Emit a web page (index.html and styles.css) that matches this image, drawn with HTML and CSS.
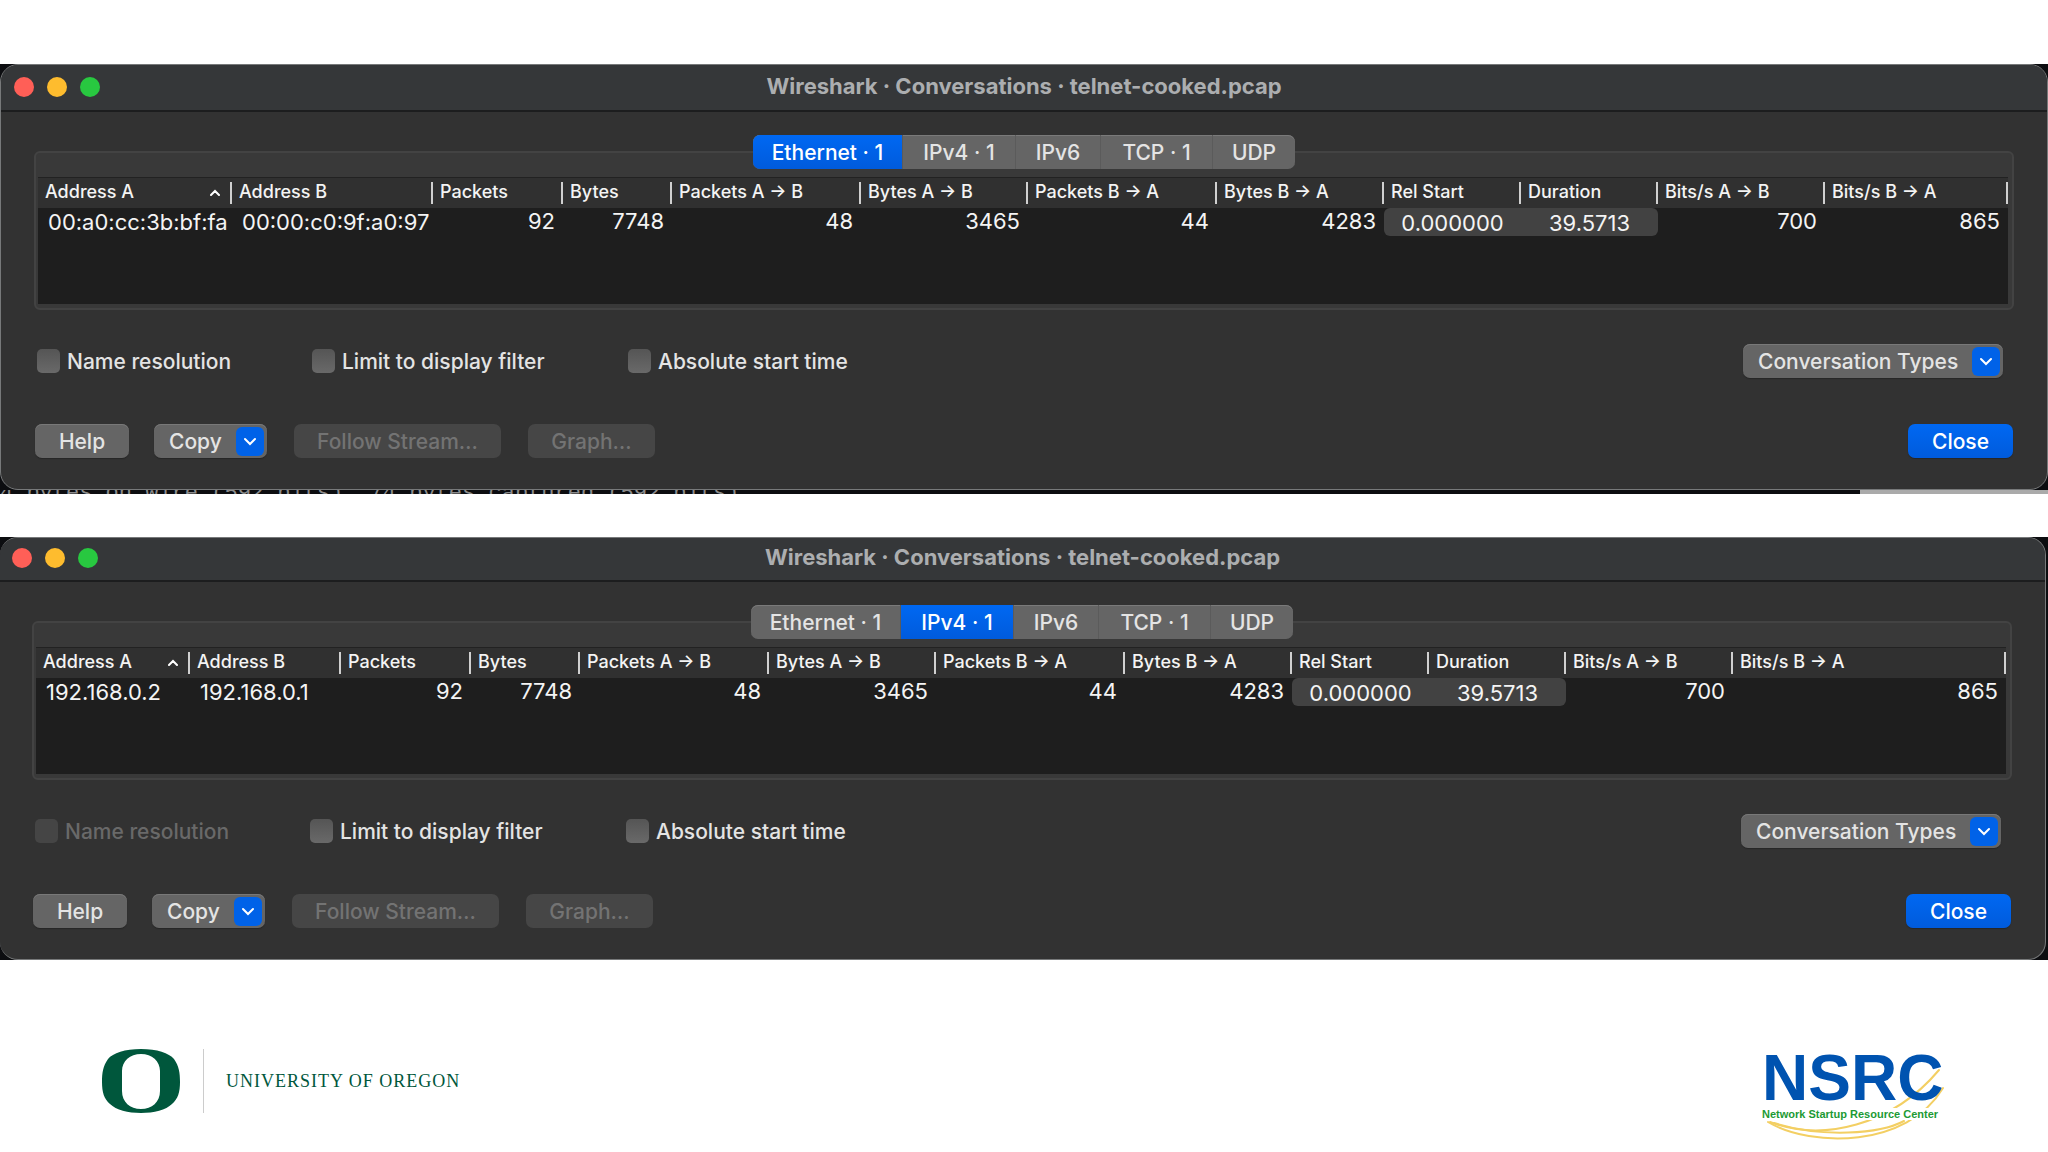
FILE: index.html
```html
<!DOCTYPE html>
<html lang="en">
<head>
  <meta charset="UTF-8">
  <meta name="viewport" content="width=device-width, initial-scale=1.0">
  <title>Wireshark Conversations</title>
  <link rel="stylesheet" href="styles.css">
</head>
<body>
  <main class="slide">

    <!-- Ethernet tab -->
    <div class="shot">
      <section class="window">
        <header class="titlebar">
          <div class="lights">
            <button class="light red" aria-label="Close window"></button>
            <button class="light yellow" aria-label="Minimize"></button>
            <button class="light green" aria-label="Zoom"></button>
          </div>
          <h2>Wireshark · Conversations · telnet-cooked.pcap</h2>
        </header>
        <div class="content">
          <nav class="tabs">
            <button class="tab tab-eth active">Ethernet · 1</button>
            <button class="tab tab-ip4">IPv4 · 1</button>
            <button class="tab tab-ip6">IPv6</button>
            <button class="tab tab-tcp">TCP · 1</button>
            <button class="tab tab-udp">UDP</button>
          </nav>
          <div class="group">
            <div class="list">
              <table>
                <colgroup>
                  <col class="mac-a"><col class="mac-b"><col class="packets"><col class="bytes">
                  <col class="packets-dir"><col class="bytes-dir"><col class="packets-dir"><col class="bytes-dir">
                  <col class="time"><col class="time"><col class="bytes-dir"><col>
                </colgroup>
                <thead>
                  <tr>
                    <th><span class="sorted">Address A <svg width="10" height="7" viewBox="0 0 10 7"><path d="M1 6l4-4 4 4"/></svg></span></th>
                    <th>Address B</th>
                    <th>Packets</th>
                    <th>Bytes</th>
                    <th>Packets A → B</th>
                    <th>Bytes A → B</th>
                    <th>Packets B → A</th>
                    <th>Bytes B → A</th>
                    <th>Rel Start</th>
                    <th>Duration</th>
                    <th>Bits/s A → B</th>
                    <th>Bits/s B → A</th>
                  </tr>
                </thead>
                <tbody>
                  <tr>
                    <td class="addr">00:a0:cc:3b:bf:fa</td>
                    <td class="addr">00:00:c0:9f:a0:97</td>
                    <td>92</td>
                    <td>7748</td>
                    <td>48</td>
                    <td>3465</td>
                    <td>44</td>
                    <td>4283</td>
                    <td class="span first">0.000000</td>
                    <td class="span last">39.5713</td>
                    <td>700</td>
                    <td>865</td>
                  </tr>
                </tbody>
              </table>
            </div>
          </div>
          <div class="options">
            <label class="check check-name"><input type="checkbox">Name resolution</label>
            <label class="check check-limit"><input type="checkbox">Limit to display filter</label>
            <label class="check"><input type="checkbox">Absolute start time</label>
            <button class="btn menu types">Conversation Types <span class="arrow"><svg width="12" height="9" viewBox="0 0 12 9"><path d="M1 2l5 5 5-5"/></svg></span></button>
          </div>
          <div class="actions">
            <button class="btn help">Help</button>
            <button class="btn menu copy">Copy <span class="arrow"><svg width="12" height="9" viewBox="0 0 12 9"><path d="M1 2l5 5 5-5"/></svg></span></button>
            <button class="btn follow" disabled>Follow Stream…</button>
            <button class="btn graph" disabled>Graph…</button>
            <button class="btn close">Close</button>
          </div>
        </div>
      </section>
      <div class="behind">4 bytes on wire (592 bits), 74 bytes captured (592 bits)</div>
    </div>

    <!-- IPv4 tab -->
    <div class="shot second">
      <section class="window">
        <header class="titlebar">
          <div class="lights">
            <button class="light red" aria-label="Close window"></button>
            <button class="light yellow" aria-label="Minimize"></button>
            <button class="light green" aria-label="Zoom"></button>
          </div>
          <h2>Wireshark · Conversations · telnet-cooked.pcap</h2>
        </header>
        <div class="content">
          <nav class="tabs">
            <button class="tab tab-eth">Ethernet · 1</button>
            <button class="tab tab-ip4 active">IPv4 · 1</button>
            <button class="tab tab-ip6">IPv6</button>
            <button class="tab tab-tcp">TCP · 1</button>
            <button class="tab tab-udp">UDP</button>
          </nav>
          <div class="group">
            <div class="list">
              <table>
                <colgroup>
                  <col class="ip-a"><col class="ip-b"><col class="packets"><col class="bytes">
                  <col class="packets-dir"><col class="bytes-dir"><col class="packets-dir"><col class="bytes-dir">
                  <col class="time"><col class="time"><col class="bytes-dir"><col>
                </colgroup>
                <thead>
                  <tr>
                    <th><span class="sorted">Address A <svg width="10" height="7" viewBox="0 0 10 7"><path d="M1 6l4-4 4 4"/></svg></span></th>
                    <th>Address B</th>
                    <th>Packets</th>
                    <th>Bytes</th>
                    <th>Packets A → B</th>
                    <th>Bytes A → B</th>
                    <th>Packets B → A</th>
                    <th>Bytes B → A</th>
                    <th>Rel Start</th>
                    <th>Duration</th>
                    <th>Bits/s A → B</th>
                    <th>Bits/s B → A</th>
                  </tr>
                </thead>
                <tbody>
                  <tr>
                    <td class="addr">192.168.0.2</td>
                    <td class="addr">192.168.0.1</td>
                    <td>92</td>
                    <td>7748</td>
                    <td>48</td>
                    <td>3465</td>
                    <td>44</td>
                    <td>4283</td>
                    <td class="span first">0.000000</td>
                    <td class="span last">39.5713</td>
                    <td>700</td>
                    <td>865</td>
                  </tr>
                </tbody>
              </table>
            </div>
          </div>
          <div class="options">
            <label class="check check-name off"><input type="checkbox" disabled>Name resolution</label>
            <label class="check check-limit"><input type="checkbox">Limit to display filter</label>
            <label class="check"><input type="checkbox">Absolute start time</label>
            <button class="btn menu types">Conversation Types <span class="arrow"><svg width="12" height="9" viewBox="0 0 12 9"><path d="M1 2l5 5 5-5"/></svg></span></button>
          </div>
          <div class="actions">
            <button class="btn help">Help</button>
            <button class="btn menu copy">Copy <span class="arrow"><svg width="12" height="9" viewBox="0 0 12 9"><path d="M1 2l5 5 5-5"/></svg></span></button>
            <button class="btn follow" disabled>Follow Stream…</button>
            <button class="btn graph" disabled>Graph…</button>
            <button class="btn close">Close</button>
          </div>
        </div>
      </section>
    </div>
  </main>

  <footer class="logos">
    <div class="oregon">
      <svg width="78" height="64" viewBox="0 0 78 64">
        <path fill="#00573c" fill-rule="evenodd" d="M39 0C55 0 67 4 72 10C77 17 78 24 78 33C78 43 76 50 70 55C64 61 52 64 39 64C26 64 14 61 8 55C2 50 0 43 0 33C0 24 1 17 6 10C11 4 23 0 39 0ZM39 5C28 5 20 12 20 22V42C20 53 28 60 39 60C50 60 58 53 58 42V22C58 12 50 5 39 5Z"/>
      </svg>
      <span class="oregon-name">UNIVERSITY OF OREGON</span>
    </div>
    <div class="nsrc">
      <svg class="swoosh" width="184" height="96" viewBox="0 0 184 96" fill="none" stroke="#f3cf63" stroke-width="2">
        <path d="M6 72C50 98 145 98 181 38"/>
        <path d="M8 72C60 92 130 76 177 20"/>
        <path d="M12 73C60 88 118 84 142 71"/>
      </svg>
      <span class="nsrc-name">NSRC</span>
      <span class="nsrc-tag">Network Startup Resource Center</span>
    </div>
  </footer>
</body>
</html>
```
FILE: styles.css
```css
:root {
  --win: #323232;
  --bar: #353739;
  --list: #1e1e1e;
  --button: #656565;
  --blue: #0062e8;
  --text: #e4e4e4;
  --font: Inter, "Liberation Sans", sans-serif;
}
* {
  box-sizing: border-box;
}
body {
  margin: 0;
  min-height: 100vh;
  background: #fff;
  font-family: var(--font);
  font-size: 21px;
  font-weight: 500;
  color: var(--text);
}
.slide {
  padding-top: 64px;
}
.shot {
  background: #0c0d10;
}
.second {
  margin-top: 43px;
}
.window {
  background: var(--win);
  border: 1px solid #77797a;
  border-radius: 18px;
  overflow: hidden;
}
.second .window {
  margin-right: 2px;
  border-left: 0;
}
.titlebar {
  position: relative;
  height: 47px;
  background: var(--bar);
  border-bottom: 2px solid #1c1d1e;
}
.second .titlebar {
  height: 44px;
}
.titlebar h2 {
  margin: 0;
  font-size: 22px;
  line-height: 42px;
  font-weight: 700;
  text-align: center;
  color: #acaeb0;
}
.second h2 {
  line-height: 38px;
}
.lights {
  position: absolute;
  left: 13px;
  top: 12px;
  display: flex;
  gap: 13px;
}
.second .lights {
  left: 12px;
  top: 10px;
}
.light {
  width: 20px;
  height: 20px;
  padding: 0;
  border: 0;
  border-radius: 50%;
}
.red { background: #ff5f57; }
.yellow { background: #febc2e; }
.green { background: #28c840; }

.content {
  padding: 23px 33px 31px;
}
.second .content {
  padding-left: 32px;
}
.tabs {
  position: relative;
  display: flex;
  width: 542px;
  height: 34px;
  margin: 0 auto -18px;
  border-radius: 7px;
  background: var(--button);
  box-shadow: inset 0 1px #7a7a7a;
  overflow: hidden;
}
.tab {
  padding: 0;
  border: 0;
  border-right: 1px solid #5b5b5b;
  background: none;
  color: var(--text);
  font: inherit;
}
.tab:last-child {
  border-right: 0;
}
.tab.active {
  background: linear-gradient(#0068f2, #005bdc);
  color: #fff;
}
.tab-eth { width: 150px; }
.tab-ip4 { width: 113px; }
.tab-ip6 { width: 85px; }
.tab-tcp { width: 112px; }
.tab-udp { flex: 1; }

.group {
  border: 2px solid #434343;
  border-radius: 6px;
  background: #393939;
  padding: 24px 4px 4px 2px;
}
.list {
  height: 127px;
  background: var(--list);
  border-top: 1px solid #222;
}
table {
  width: 100%;
  table-layout: fixed;
  border-collapse: separate;
  border-spacing: 0;
  font-size: 22px;
  font-weight: 400;
  color: #f4f4f4;
}
.mac-a { width: 194px; }
.mac-b { width: 201px; }
.ip-a { width: 154px; }
.ip-b { width: 151px; }
.packets { width: 130px; }
.bytes { width: 109px; }
.packets-dir { width: 189px; }
.bytes-dir { width: 167px; }
.time { width: 137px; }

thead tr {
  background: #303030;
}
th {
  height: 30px;
  padding: 0 7px 2px;
  font-size: 18px;
  line-height: 22px;
  font-weight: 500;
  text-align: left;
  white-space: nowrap;
  background: linear-gradient(#d0d0d0, #d0d0d0) right 4px / 2px 22px no-repeat;
}
.sorted {
  display: flex;
  align-items: center;
  justify-content: space-between;
  padding-right: 5px;
}
svg path {
  stroke-linecap: round;
}
.sorted svg,
.arrow svg {
  fill: none;
  stroke: #fff;
  stroke-width: 2;
}
td {
  height: 28px;
  padding: 0 8px 2px;
  line-height: 26px;
  text-align: right;
  white-space: nowrap;
}
td.addr {
  padding: 0 10px;
  text-align: left;
}
td.span {
  padding: 2px 0 0;
  text-align: center;
  background: #424242;
}
.first { border-radius: 6px 0 0 6px; }
.last { border-radius: 0 6px 6px 0; }

.options {
  display: flex;
  align-items: center;
  height: 34px;
  margin-top: 34px;
  padding: 0 11px 0 3px;
}
.check {
  display: flex;
  align-items: center;
  gap: 7px;
}
.check-name { width: 275px; }
.check-limit { width: 316px; }
.check input {
  appearance: none;
  width: 23px;
  height: 24px;
  margin: 0;
  border-radius: 5px;
  background: linear-gradient(#555, #696969);
}
.check.off {
  color: #696969;
}
.check.off input {
  background: #454545;
}
.btn {
  height: 34px;
  padding: 0;
  border: 0;
  border-radius: 7px;
  background: var(--button);
  box-shadow: inset 0 1px #787878, 0 1px 1px #262626;
  color: var(--text);
  font: inherit;
}
.btn:disabled {
  background: #464646;
  box-shadow: none;
  color: #737373;
}
.menu {
  display: flex;
  align-items: center;
  justify-content: space-between;
  padding: 0 3px 0 15px;
}
.arrow {
  display: flex;
  align-items: center;
  justify-content: center;
  width: 28px;
  height: 29px;
  border-radius: 6px;
  background: var(--blue);
}
.types {
  width: 260px;
  margin-left: auto;
}
.actions {
  display: flex;
  align-items: center;
  margin-top: 46px;
  padding: 0 1px;
}
.help { width: 94px; margin-right: 25px; }
.copy { width: 113px; margin-right: 27px; }
.follow { width: 207px; margin-right: 27px; }
.graph { width: 127px; }
.btn.close {
  width: 105px;
  margin-left: auto;
  background: linear-gradient(#0068f2, #005bdc);
  box-shadow: 0 1px 1px #262626;
  color: #fff;
}

/* terminal line showing under the window */
.behind {
  height: 4px;
  overflow: hidden;
  background: linear-gradient(#aaa, #aaa) right / 188px 100% no-repeat;
  font: 22px/8px "Liberation Mono", monospace;
  color: #8b8b8b;
  white-space: nowrap;
}

.logos {
  display: flex;
  align-items: flex-start;
  justify-content: space-between;
  padding: 88px 100px 0 102px;
}
.oregon {
  display: flex;
  align-items: center;
  height: 66px;
}
.oregon-name {
  display: flex;
  align-items: center;
  height: 64px;
  margin-left: 23px;
  padding-left: 22px;
  border-left: 1px solid #ccc;
  font-family: "Liberation Serif", serif;
  font-size: 18px;
  font-weight: 400;
  letter-spacing: 1px;
  color: #00573c;
}
.nsrc {
  position: relative;
  display: flex;
  flex-direction: column;
  width: 186px;
  height: 100px;
  font-family: "Liberation Sans", sans-serif;
  font-weight: bold;
}
.swoosh {
  position: absolute;
  left: 0;
  top: 2px;
}
.nsrc-name {
  position: relative;
  font-size: 64px;
  line-height: 60px;
  color: #0053b0;
}
.nsrc-tag {
  position: relative;
  font-size: 11px;
  line-height: 12px;
  background: #fff;
  color: #1c9a34;
  white-space: nowrap;
}
```
